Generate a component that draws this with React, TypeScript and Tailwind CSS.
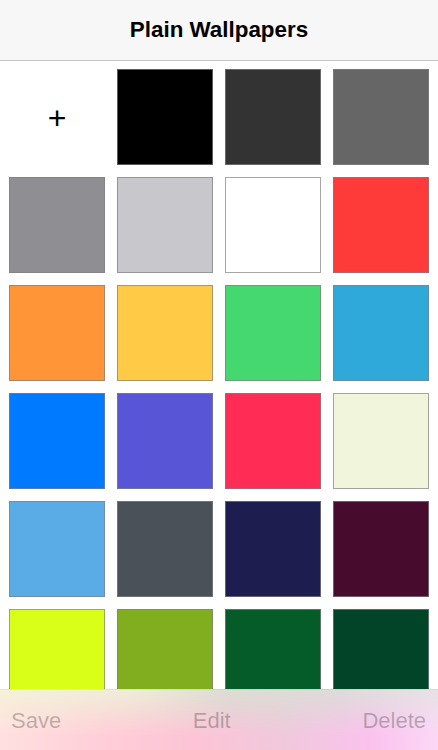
import React from "react";

const SWATCHES: (string | null)[] = [
  null, "#000000", "#333333", "#666666",
  "#8e8e93", "#c7c7cc", "#ffffff", "#ff3b3a",
  "#ff9537", "#ffca45", "#45d870", "#2fa9d9",
  "#007aff", "#5856d6", "#ff2d55", "#f1f5dc",
  "#5aace6", "#4b5159", "#1e1d50", "#470b2e",
  "#d9ff19", "#80ae1f", "#055c29", "#014427",
];

function Swatch({ color }: { color: string | null }) {
  if (color === null) {
    return (
      <button className="flex h-[96px] w-[96px] items-center justify-center bg-white">
        <span className="mt-[1px] text-[32px] leading-none text-black">+</span>
      </button>
    );
  }
  return (
    <button
      className="h-[96px] w-[96px] border border-[#808080b3]"
      style={{ backgroundColor: color }}
    />
  );
}

export default function App() {
  return (
    <div className="relative h-[750px] w-[438px] overflow-hidden bg-white font-['Liberation_Sans',Arial,sans-serif]">
      <header className="flex h-[61px] items-center justify-center border-b border-[#c4c4c4] bg-[#f7f7f7]">
        <h1 className="text-[22.4px] font-bold text-black">Plain Wallpapers</h1>
      </header>

      <div className="grid grid-cols-4 gap-3 px-[9px] pt-[8px]">
        {SWATCHES.map((c, i) => (
          <Swatch key={i} color={c} />
        ))}
      </div>

      <div className="absolute inset-x-0 bottom-0 h-[61px] border-t border-black/5 bg-[linear-gradient(to_right,#f6f2d8_0%,#efeed8_30%,#dbded4_52%,#dedcda_78%,#e8e2e6_100%)]">
        <div className="absolute inset-0 bg-[linear-gradient(to_right,#ffe0e0_0%,#ffcdd8_25%,#fcc4d6_45%,#f0c8dc_65%,#fac2ee_85%,#fcd8f6_100%)] [mask-image:linear-gradient(to_bottom,transparent_0%,black_75%)]" />
        <div className="relative flex h-full items-center justify-between pl-[11px] pr-[12px] text-[22px] text-black/25">
          <span>Save</span>
          <span>Edit</span>
          <span>Delete</span>
        </div>
      </div>
    </div>
  );
}
